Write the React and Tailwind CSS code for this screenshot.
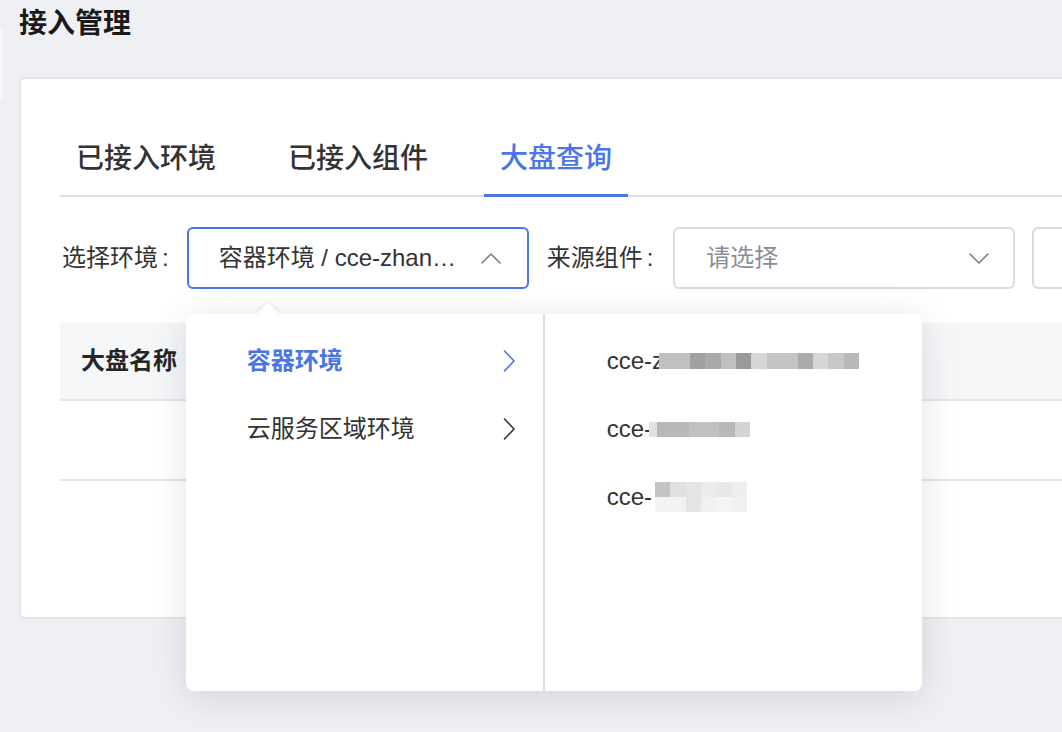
import React from 'react';

const blue = '#4b74e6';

const Chevron = ({ dir = 'down', className = '' }) => {
  const d = {
    down: 'M1 1l9 9 9-9',
    up: 'M1 10l9-9 9 9',
    right: 'M1.5 1l9.5 10-9.5 10',
  }[dir];
  const box = dir === 'right' ? '0 0 12 22' : '0 0 20 11';
  return (
    <svg viewBox={box} className={className} fill="none" stroke="currentColor" strokeWidth="1.6" strokeLinecap="round" strokeLinejoin="round">
      <path d={d} />
    </svg>
  );
};

// pixelated (blurred) remainder of cluster names
const Mosaic = ({ rows, cell = 15.4, h = 16, className = '' }) => (
  <span className={`inline-flex flex-col align-middle ${className}`}>
    {rows.map((row, i) => (
      <span key={i} className="flex">
        {row.map((c, j) => (
          <span key={j} style={{ background: c.c, width: c.w || cell, height: h }} />
        ))}
      </span>
    ))}
  </span>
);

const clusters = [
  {
    prefix: 'cce-z',
    rows: [['#c0c0c0', '#c0c0c0', '#a0a0a0', '#a9a9a9', '#c0c0c0', '#9a9a9a', '#d6d6d6', '#c4c4c4', '#c4c4c4', '#ababab', '#d6d6d6', '#c8c8c8', '#b8b8b8'].map((c) => ({ c }))],
    h: 16,
    cls: '-ml-[5px]',
  },
  {
    prefix: 'cce-',
    rows: [[{ c: '#e2e2e2', w: 8 }, { c: '#b8b8b8', w: 32 }, { c: '#c0c0c0', w: 30 }, { c: '#b8b8b8', w: 16 }, { c: '#d4d4d4', w: 15 }]],
    h: 15,
    cls: '-ml-[3px]',
  },
  {
    prefix: 'cce-',
    rows: [
      ['#c4c4c4', '#e0e0e0', '#e4e4e4', '#ebebeb', '#e8e8e8', '#eeeeee'].map((c) => ({ c })),
      ['#f3f3f3', '#f2f2f2', '#e4e4e4', '#f0f0f0', '#f4f4f4', '#f0f0f0'].map((c) => ({ c })),
    ],
    h: 15,
    cls: 'ml-[3px]',
  },
];

const tabs = ['已接入环境', '已接入组件', '大盘查询'];

const Label = ({ children, className = '' }) => (
  <span className={`shrink-0 ${className}`}>
    {children}
    <span className="ml-[4px]">:</span>
  </span>
);

export default function App() {
  return (
    <div
      className="w-[1062px] h-[732px] overflow-hidden bg-[#eff0f4] flex text-[#333]"
      style={{ fontFamily: '"Helvetica Neue", "Liberation Sans", "Noto Sans CJK SC", sans-serif' }}
    >
      {/* sidebar edge */}
      <div className="w-[3px] h-[72px] mt-[28px] shrink-0 rounded-r-[3px] bg-[#f7f8fa]" />

      <div className="pl-[16px] min-w-0">
        <h1 className="pt-[8px] h-[77px] text-[28px] leading-[32px] font-bold text-[#1a1a1a]">接入管理</h1>

        <div className="w-[1100px] h-[542px] bg-white border-2 border-[#e3e5ea] rounded-[6px] pl-[39px] pt-[60px]">
          {/* tabs */}
          <div className="flex gap-[40px] border-b-2 border-[#dedfe3]">
            {tabs.map((t, i) => (
              <div key={t} className="relative px-[16px] pb-[16px]">
                <span className={`text-[28px] leading-[40px] font-medium ${i === 2 ? 'text-[#4b74e6]' : 'text-[#333]'}`}>{t}</span>
                {i === 2 && <div className="absolute left-0 right-0 -bottom-[2px] h-[3px] bg-[#4b74e6]" />}
              </div>
            ))}
          </div>

          {/* filters */}
          <div className="flex items-center mt-[30px] h-[62px] text-[24px] whitespace-nowrap">
            <Label className="ml-[2px] mr-[18px]">选择环境</Label>
            <div className="relative shrink-0">
              <div className="w-[342px] h-[62px] border-2 border-[#4b74e6] rounded-[6px] flex items-center pl-[30px] pr-[26px]">
                <span className="flex-1 truncate">容器环境 / cce-zhan…</span>
                <Chevron dir="up" className="w-[20px] h-[11px] text-[#7b7e87] ml-[20px]" />
              </div>

              {/* cascader popup */}
              <div className="absolute z-10 left-[-1px] top-[87px] w-[736px] h-[377px] bg-white rounded-[8px] shadow-[0_6px_36px_rgba(20,25,45,0.13)] flex">
                <div className="absolute -top-[8px] left-[74px] w-[16px] h-[16px] bg-white rotate-45 shadow-[-2px_-2px_4px_rgba(20,25,45,0.05)]" />
                <div className="relative w-[359px] border-r-2 border-[#dcdde0] pt-[13px]">
                  <div className="h-[68px] flex items-center pl-[61px] pr-[28px]" style={{ color: blue }}>
                    <span className="flex-1 font-bold">容器环境</span>
                    <Chevron dir="right" className="w-[12px] h-[22px]" />
                  </div>
                  <div className="h-[68px] flex items-center pl-[61px] pr-[28px] text-[#333]">
                    <span className="flex-1">云服务区域环境</span>
                    <Chevron dir="right" className="w-[12px] h-[22px]" />
                  </div>
                </div>
                <div className="flex-1 pt-[13px] pl-[62px]">
                  {clusters.map((c, i) => (
                    <div key={i} className="h-[68px] flex items-center text-[#333]">
                      <span>{c.prefix}</span>
                      <Mosaic rows={c.rows} h={c.h} className={c.cls} />
                    </div>
                  ))}
                </div>
              </div>
            </div>

            <Label className="ml-[18px] mr-[20px]">来源组件</Label>
            <div className="shrink-0 w-[342px] h-[62px] border-2 border-[#dadbdf] rounded-[6px] flex items-center pl-[31px] pr-[24px]">
              <span className="flex-1 text-[#8a8d96]">请选择</span>
              <Chevron dir="down" className="w-[20px] h-[11px] text-[#7b7e87]" />
            </div>
            <div className="shrink-0 ml-[17px] w-[200px] h-[62px] border-2 border-[#dadbdf] rounded-[6px]" />
          </div>

          {/* table */}
          <div className="mt-[34px]">
            <div className="h-[78px] bg-[#f5f6f8] border-b-2 border-[#e3e5ea] flex items-center pl-[21px]">
              <span className="text-[24px] font-bold text-[#262626]">大盘名称</span>
            </div>
            <div className="h-[80px] border-b-2 border-[#e3e5ea]" />
          </div>
        </div>
      </div>
    </div>
  );
}
